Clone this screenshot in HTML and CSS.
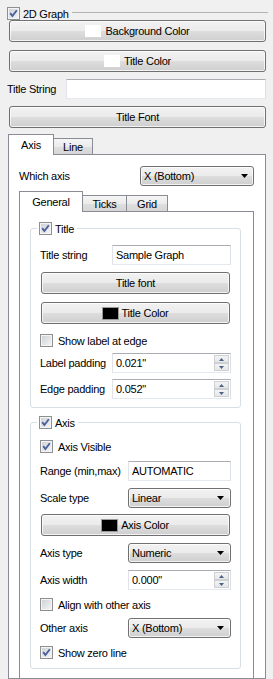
FILE: index.html
```html
<!DOCTYPE html>
<html lang="en">
  <head>
    <meta charset="UTF-8" />
    <meta name="viewport" content="width=device-width, initial-scale=1.0" />
    <title>2D Graph</title>
    <link rel="stylesheet" href="styles.css">
  </head>
  <body>
    <div class="panel">
      <div class="top-head">
        <span class="check"><svg viewBox="0 0 11 11"><path d="M2.2 5.2 4.4 8 8.8 2.2" /></svg></span>
        <span class="head-text">2D Graph</span>
        <span class="head-line"></span>
      </div>

      <button class="btn top first"><span class="swatch white"></span>Background Color</button>
      <button class="btn top gap8"><span class="swatch white"></span>Title Color</button>

      <div class="field title-string">
        <span class="lbl">Title String</span>
        <span class="edit"></span>
      </div>

      <button class="btn top gap7">Title Font</button>

      <div class="tabwidget outer">
        <div class="tabbar">
          <div class="tab active w-axis">Axis</div>
          <div class="tab w-line">Line</div>
        </div>
        <div class="pane outer-pane">
          <div class="field which-axis">
            <span class="lbl">Which axis</span>
            <span class="combo wide">X (Bottom)<svg class="arrow" viewBox="0 0 7 4"><path d="M0 0h7L3.5 4z" /></svg></span>
          </div>

          <div class="tabwidget inner">
            <div class="tabbar">
              <div class="tab active w-general">General</div>
              <div class="tab w-ticks">Ticks</div>
              <div class="tab w-grid">Grid</div>
            </div>
            <div class="pane inner-pane">
              <!-- Title group -->
              <fieldset class="group title-group">
                <legend>
                  <span class="legend-in">
                    <span class="check"><svg viewBox="0 0 11 11"><path d="M2.2 5.2 4.4 8 8.8 2.2" /></svg></span>
                    <span class="ck-text tight">Title</span>
                  </span>
                </legend>
                <div class="field short m10">
                  <span class="lbl">Title string</span>
                  <span class="edit">Sample Graph</span>
                </div>
                <button class="btn inner-btn m7">Title font</button>
                <button class="btn inner-btn m8"><span class="swatch black"></span>Title Color</button>
                <div class="ck-row m10">
                  <span class="check off"></span>
                  <span class="ck-text">Show label at edge</span>
                </div>
                <div class="field short m6">
                  <span class="lbl">Label padding</span>
                  <span class="spin">
                    <span class="spin-val">0.021"</span>
                    <span class="spin-btns">
                      <span class="sb"><svg viewBox="0 0 5 3"><path d="M0 3h5L2.5 0z" /></svg></span>
                      <span class="sb"><svg viewBox="0 0 5 3"><path d="M0 0h5L2.5 3z" /></svg></span>
                    </span>
                  </span>
                </div>
                <div class="field short m6">
                  <span class="lbl">Edge padding</span>
                  <span class="spin">
                    <span class="spin-val">0.052"</span>
                    <span class="spin-btns">
                      <span class="sb"><svg viewBox="0 0 5 3"><path d="M0 3h5L2.5 0z" /></svg></span>
                      <span class="sb"><svg viewBox="0 0 5 3"><path d="M0 0h5L2.5 3z" /></svg></span>
                    </span>
                  </span>
                </div>
              </fieldset>

              <!-- Axis group -->
              <fieldset class="group axis-group">
                <legend>
                  <span class="legend-in">
                    <span class="check"><svg viewBox="0 0 11 11"><path d="M2.2 5.2 4.4 8 8.8 2.2" /></svg></span>
                    <span class="ck-text tight">Axis</span>
                  </span>
                </legend>
                <div class="ck-row m11">
                  <span class="check"><svg viewBox="0 0 11 11"><path d="M2.2 5.2 4.4 8 8.8 2.2" /></svg></span>
                  <span class="ck-text">Axis Visible</span>
                </div>
                <div class="field long m8">
                  <span class="lbl">Range (min,max)</span>
                  <span class="edit">AUTOMATIC</span>
                </div>
                <div class="field long m7">
                  <span class="lbl">Scale type</span>
                  <span class="combo">Linear<svg class="arrow" viewBox="0 0 7 4"><path d="M0 0h7L3.5 4z" /></svg></span>
                </div>
                <button class="btn inner-btn m6"><span class="swatch black"></span>Axis Color</button>
                <div class="field long m7">
                  <span class="lbl">Axis type</span>
                  <span class="combo">Numeric<svg class="arrow" viewBox="0 0 7 4"><path d="M0 0h7L3.5 4z" /></svg></span>
                </div>
                <div class="field long m7">
                  <span class="lbl">Axis width</span>
                  <span class="spin">
                    <span class="spin-val">0.000"</span>
                    <span class="spin-btns">
                      <span class="sb"><svg viewBox="0 0 5 3"><path d="M0 3h5L2.5 0z" /></svg></span>
                      <span class="sb"><svg viewBox="0 0 5 3"><path d="M0 0h5L2.5 3z" /></svg></span>
                    </span>
                  </span>
                </div>
                <div class="ck-row m8">
                  <span class="check off"></span>
                  <span class="ck-text">Align with other axis</span>
                </div>
                <div class="field long m7">
                  <span class="lbl">Other axis</span>
                  <span class="combo">X (Bottom)<svg class="arrow" viewBox="0 0 7 4"><path d="M0 0h7L3.5 4z" /></svg></span>
                </div>
                <div class="ck-row m8">
                  <span class="check"><svg viewBox="0 0 11 11"><path d="M2.2 5.2 4.4 8 8.8 2.2" /></svg></span>
                  <span class="ck-text">Show zero line</span>
                </div>
              </fieldset>
            </div>
          </div>
        </div>
      </div>
    </div>
  </body>
</html>
```

FILE: styles.css
```css
* {
  box-sizing: border-box;
}
html,
body {
  margin: 0;
  height: 679px;
  overflow: hidden;
}
body {
  background: #f0f0f0;
  font-family: "Liberation Sans", Arial, sans-serif;
  font-size: 11px;
  letter-spacing: -0.25px;
  color: #000;
}
.panel {
  padding: 7px 7px 0 7px;
}

/* top level group header */
.top-head {
  display: flex;
  height: 13px;
  align-items: center;
}
.head-text {
  margin-left: 3px;
}
.head-line {
  flex: 1;
  align-self: flex-start;
  margin-top: 5px;
  margin-left: 3px;
  margin-right: -2px;
  border-top: 1px solid #b4b4b4;
}

/* checkboxes */
.check {
  width: 13px;
  height: 13px;
  flex: none;
  display: inline-flex;
  border: 1px solid #8e8f8f;
  background: linear-gradient(135deg, #cbcfd5, #f7f7f7);
  box-shadow: inset 0 0 0 1px #f4f4f4;
}
.check svg {
  width: 11px;
  height: 11px;
}
.check path {
  fill: none;
  stroke: #4a5f9c;
  stroke-width: 1.9;
}
.ck-row {
  display: flex;
  align-items: center;
  height: 13px;
}
.ck-text {
  margin-left: 5px;
}
.ck-text.tight {
  margin-left: 3px;
}

/* push buttons */
.btn {
  display: flex;
  align-items: center;
  justify-content: center;
  width: 100%;
  height: 22px;
  padding: 0;
  margin: 0;
  font: inherit;
  letter-spacing: inherit;
  color: #000;
  border: 1px solid #707070;
  border-radius: 3px;
  background: linear-gradient(#f2f2f2, #ebebeb 48%, #dddddd 52%, #cfcfcf);
  box-shadow: inset 0 0 0 1px rgba(255, 255, 255, 0.75);
}
.btn.top {
  margin-left: 2px;
  width: calc(100% - 2px);
}
.btn.gap8 {
  margin-top: 8px;
}
.btn.gap7 {
  margin-top: 7px;
}
.btn.inner-btn {
  margin-left: 1px;
  width: calc(100% - 2px);
}
.swatch {
  width: 16px;
  height: 12px;
  margin-right: 4px;
}
.swatch.white {
  background: #fff;
}
.swatch.black {
  width: 15px;
  height: 11px;
  background: #000;
  box-shadow: 0 0 0 1px #9a9a9a;
}

/* form rows */
.field {
  display: flex;
  align-items: center;
  height: 20px;
}
.field .lbl {
  flex: none;
}
.title-string {
  margin-top: 7px;
}
.title-string .lbl {
  width: 59px;
}
.short .lbl {
  width: 72px;
}
.long .lbl {
  width: 88px;
}
.edit {
  flex: 1;
  height: 20px;
  display: flex;
  align-items: center;
  padding-left: 3px;
  background: #fff;
  border: 1px solid;
  border-color: #abadb3 #dbdfe6 #e3e9ef #e2e3ea;
}

/* combo boxes */
.combo {
  flex: 1;
  height: 20px;
  display: flex;
  align-items: center;
  justify-content: space-between;
  padding: 0 6px 0 3px;
  border: 1px solid #707070;
  border-radius: 3px;
  background: linear-gradient(#f2f2f2, #ebebeb 48%, #dddddd 52%, #cfcfcf);
  box-shadow: inset 0 0 0 1px rgba(255, 255, 255, 0.75);
}
.combo.wide {
  flex: none;
  width: 114px;
  padding-right: 5px;
}
.arrow {
  width: 7px;
  height: 4px;
}
.arrow path {
  fill: #000;
}
.which-axis {
  justify-content: space-between;
}

/* spin boxes */
.spin {
  flex: 1;
  height: 20px;
  display: flex;
  background: #fff;
  border: 1px solid;
  border-color: #abadb3 #dbdfe6 #e3e9ef #e2e3ea;
}
.spin-val {
  flex: 1;
  display: flex;
  align-items: center;
  padding-left: 3px;
}
.spin-btns {
  width: 15px;
  display: flex;
  flex-direction: column;
  margin: 1px 1px 1px 0;
}
.sb {
  height: 8.5px;
  display: flex;
  align-items: center;
  justify-content: center;
  border: 1px solid #cdd0d5;
  background: linear-gradient(#f4f4f4, #e6e6e6);
}
.sb svg {
  width: 5px;
  height: 3px;
}
.sb path {
  fill: #4d6185;
}

/* tab widgets */
.tabwidget.outer {
  margin-top: 6px;
  margin-left: 1px;
}
.tabwidget.inner {
  margin-top: 5px;
}
.tabbar {
  display: flex;
  align-items: flex-end;
  height: 20px;
  position: relative;
  z-index: 1;
}
.tab {
  height: 16px;
  margin-left: -1px;
  display: flex;
  align-items: center;
  justify-content: center;
  border: 1px solid #898c95;
  border-bottom: none;
  background: linear-gradient(#f5f5f5, #ebebeb 50%, #dfdfdf 52%, #d6d6d6);
}
.tab.active {
  height: 21px;
  margin-left: 0;
  margin-bottom: -1px;
  padding-bottom: 1px;
  background: #fff;
  position: relative;
  z-index: 2;
}
.w-axis {
  width: 46px;
}
.w-line {
  width: 40px;
}
.w-general {
  width: 64px;
}
.w-ticks {
  width: 45px;
}
.w-grid {
  width: 42px;
}
.pane {
  border: 1px solid #898c95;
  background: #fff;
}
.outer-pane {
  height: 525px;
  padding: 11px 11px 0 10px;
}
.inner-pane {
  height: 468px;
  padding: 10px 12px 0 10px;
}

/* group boxes */
.group {
  margin: 0;
  min-width: 0;
  padding: 0 9px 8px 9px;
  border: 1px solid #d5dfe5;
  border-radius: 3px;
}
.group legend {
  padding: 0 3px 0 2px;
  margin-left: -3px;
}
.legend-in {
  display: flex;
  align-items: center;
  height: 13px;
}
.axis-group {
  margin-top: 8px;
  padding-bottom: 9px;
}
.m6 {
  margin-top: 6px;
}
.m7 {
  margin-top: 7px;
}
.m8 {
  margin-top: 8px;
}
.m10 {
  margin-top: 10px;
}
.m11 {
  margin-top: 11px;
}
```
